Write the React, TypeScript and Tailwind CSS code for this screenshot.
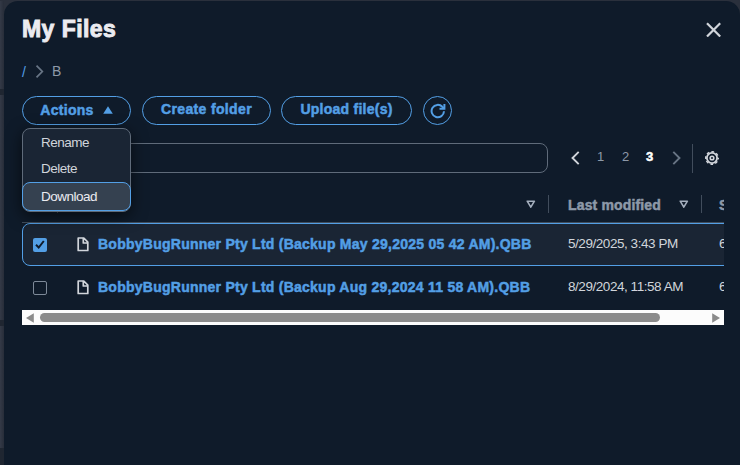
import { useState } from "react";

interface FileRow {
  name: string;
  modified: string;
}

const files: FileRow[] = [
  {
    name: "BobbyBugRunner Pty Ltd (Backup May 29,2025 05 42 AM).QBB",
    modified: "5/29/2025, 3:43 PM",
  },
  {
    name: "BobbyBugRunner Pty Ltd (Backup Aug 29,2024 11 58 AM).QBB",
    modified: "8/29/2024, 11:58 AM",
  },
];

const heavy = "font-bold [-webkit-text-stroke:0.5px_currentColor]";
const pill =
  "box-border flex h-[29px] shrink-0 items-center justify-center rounded-full border border-[#539fe5] text-sm leading-none text-[#539fe5]";

function Chevron({ left = false, className = "" }: { left?: boolean; className?: string }) {
  return (
    <svg width="9" height="14" viewBox="0 0 9 14" fill="none" className={`shrink-0 ${className}`}>
      <path
        d={left ? "M7.7 0.8 1.5 7l6.2 6.2" : "M1.3 0.8 7.5 7l-6.2 6.2"}
        stroke="currentColor"
        strokeWidth="1.9"
      />
    </svg>
  );
}

function SortIcon() {
  return (
    <svg width="10" height="9" viewBox="0 0 10 9" fill="none" className="shrink-0 text-[#a4afbd]">
      <path d="M1.2 1.2h7.2L4.8 7.2z" stroke="currentColor" strokeWidth="1.6" strokeLinejoin="round" />
    </svg>
  );
}

function FileIcon() {
  return (
    <svg width="12" height="15" viewBox="0 0 12 15" fill="none" className="shrink-0 text-[#d1d5db]">
      <path d="M1.2 1h5.6l4 4.2V13.5H1.2zM6.3 1v5h4.5" stroke="currentColor" strokeWidth="1.7" strokeLinejoin="round" />
    </svg>
  );
}

function GearIcon() {
  return (
    <svg width="14" height="14" viewBox="0 0 14 14" fill="none" stroke="#d1d5db" className="shrink-0">
      <circle cx="7" cy="7" r="5.1" strokeWidth="1.8" />
      <circle cx="7" cy="7" r="6.3" strokeWidth="1.4" strokeDasharray="2.7 2.248" strokeDashoffset="1.35" />
      <circle cx="7" cy="7" r="1.8" strokeWidth="1.6" />
    </svg>
  );
}

export default function App() {
  const [selected, setSelected] = useState(0);

  return (
    <div className="flex h-[465px] w-[740px] overflow-hidden bg-[#2a303c] pt-px font-['Liberation_Sans',Arial,sans-serif]">
      {/* Sliver of the page behind the modal */}
      <div className="flex w-1 shrink-0 flex-col gap-[6px] bg-[#1f2631]">
        <div className="h-[88px] bg-linear-to-r from-[#343a47] to-[#272d39]" />
        <div className="h-[225px] bg-linear-to-r from-[#343a47] to-[#272d39]" />
        <div className="h-[122px] bg-linear-to-r from-[#343a47] to-[#272d39]" />
      </div>
      <div className="min-w-0 flex-1 rounded-t-[14px] bg-[#0f1b2a] pl-[18px] pr-4">
        <header className="flex h-[57px] items-center justify-between pr-[3px]">
          <h1 className="text-[23px] font-bold leading-none tracking-[0.45px] text-[#ebebf0] [-webkit-text-stroke:0.9px_currentColor]">
            My Files
          </h1>
          <svg width="15" height="15" viewBox="0 0 15 15" fill="none" stroke="#d1d5db" strokeWidth="2.2">
            <path d="M1 1.3l13.2 13.2M14.2 1.3L1 14.5" />
          </svg>
        </header>

        <nav className="flex h-[27px] items-center text-sm leading-none">
          <span className="w-[13px] text-[#539fe5]">/</span>
          <Chevron className="h-[13px] w-[9px] text-[#687585]" />
          <span className="ml-[8px] pb-px text-[#8d99a8]">B</span>
        </nav>

        <div className="relative mt-[11px] flex">
          <button className={`${pill} ${heavy} w-[109px] gap-[9px] pb-px tracking-[0.3px]`}>
            <span className="pb-px">Actions</span>
            <svg width="10" height="8" viewBox="0 0 10 8">
              <path d="M5 0.2 9.8 7.8H0.2z" fill="currentColor" />
            </svg>
          </button>
          <button className={`${pill} ${heavy} ml-[11px] w-[129px] pb-[3px] tracking-[0.35px]`}>Create folder</button>
          <button className={`${pill} ${heavy} ml-[10px] w-[131px] pb-[3px] tracking-[0.25px]`}>Upload file(s)</button>
          <button className={`${pill} ml-[11px] w-[29px]`}>
            <svg width="16" height="16" viewBox="0 0 16 16" fill="none" stroke="currentColor" strokeWidth="2">
              <path d="M14 8.3A6.2 6.2 0 1 1 12.3 3.8L14 5.4" />
              <path d="M14.4 1v4.8H9.5" />
            </svg>
          </button>

          {/* Actions menu */}
          <div className="absolute left-0 top-[32px] z-10 flex h-[84px] w-[109px] flex-col rounded-lg border border-[#5f6b7a] bg-[#1a2534] text-[13.5px] leading-none tracking-[-0.5px] text-[#d1d5db] shadow-[0_4px_16px_rgba(0,0,0,0.6)]">
            <div className="flex h-[26px] items-center pl-[18px] pt-px">Rename</div>
            <div className="flex h-[28px] items-center pl-[18px] pt-px">Delete</div>
            <div className="-mx-px flex h-[29px] items-center rounded-lg border border-[#539fe5] bg-[#354150] pl-[18px] text-[#ebebf0]">
              Download
            </div>
          </div>
        </div>

        <div className="mt-[18px] flex h-[30px] items-center">
          <div className="h-full w-[526px] shrink-0 rounded-lg border border-[#5f6b7a]" />
          <Chevron left className="ml-[23px] text-[#d1d5db]" />
          <span className="ml-[17px] w-[25px] pb-[4px] text-[13px] leading-none text-[#8d99a8]">1</span>
          <span className="w-[24px] pb-[4px] text-[13px] leading-none text-[#8d99a8]">2</span>
          <span className={`w-[26px] pb-[3px] text-[13px] leading-none text-white ${heavy}`}>3</span>
          <Chevron className="text-[#687585]" />
          <div className="ml-[11px] mr-[12px] h-[29px] w-px bg-[#414d5c]" />
          <GearIcon />
        </div>

        <div className="mt-[13px] overflow-hidden">
          <div className="flex h-[37px] w-[800px] items-center border-b border-[#414d5c] text-sm font-bold leading-none text-[#8d99a8] [-webkit-text-stroke:0.5px_currentColor]">
            <div className="flex h-[18px] w-[36px] shrink-0 border-r border-[#414d5c]" />
            <div className="flex h-[18px] w-[491px] shrink-0 items-center justify-end border-r border-[#414d5c] pr-[12px]">
              <SortIcon />
            </div>
            <div className="flex h-[18px] w-[153px] shrink-0 items-center justify-between border-r border-[#414d5c] pl-[19px] pr-[12px]">
              <span className="pt-px tracking-[0.15px]">Last modified</span>
              <SortIcon />
            </div>
            <span className="ml-[17px] pt-px">Size</span>
          </div>

          {files.map((file, i) => (
            <div
              key={file.name}
              onClick={() => setSelected(i)}
              className={`flex h-[43px] w-[800px] items-center rounded-lg border pl-[10px] text-sm leading-none ${
                selected === i ? "border-[#539fe5] bg-[#1a2534]" : "border-transparent"
              }`}
            >
              {selected === i ? (
                <span className="flex size-[14px] shrink-0 items-center justify-center rounded-[2px] bg-[#539fe5]">
                  <svg width="10" height="9" viewBox="0 0 10 9" fill="none">
                    <path d="M1 4.8l2.7 2.7L8.8 1" stroke="#0f1b2a" strokeWidth="2" />
                  </svg>
                </span>
              ) : (
                <span className="size-[14px] shrink-0 rounded-[2px] border border-[#7d8998]" />
              )}
              <span className="ml-[30px] flex pb-px">
                <FileIcon />
              </span>
              <span className={`ml-[9px] w-[470px] shrink-0 whitespace-nowrap pb-[2px] tracking-[0.25px] text-[#539fe5] ${heavy}`}>
                {file.name}
              </span>
              <span className="w-[151px] shrink-0 whitespace-nowrap pb-[2px] text-[13.5px] tracking-[-0.45px] text-[#d1d5db]">
                {file.modified}
              </span>
              <span className="whitespace-nowrap pb-[2px] text-[13.5px] text-[#d1d5db]">6.1 MB</span>
            </div>
          ))}

          <div className="mt-px flex h-[15px] items-center bg-[#fcfcfc] px-[4px]">
            <svg width="8" height="10" viewBox="0 0 8 10" fill="#8b8b8b">
              <path d="M0 5 7.8 0.2v9.6z" />
            </svg>
            <div className="ml-[6px] h-[9px] w-[620px] rounded-full bg-[#8b8b8b]" />
            <svg width="8" height="10" viewBox="0 0 8 10" fill="#8b8b8b" className="ml-auto">
              <path d="M8 5 0.2 0.2v9.6z" />
            </svg>
          </div>
        </div>
      </div>
    </div>
  );
}
